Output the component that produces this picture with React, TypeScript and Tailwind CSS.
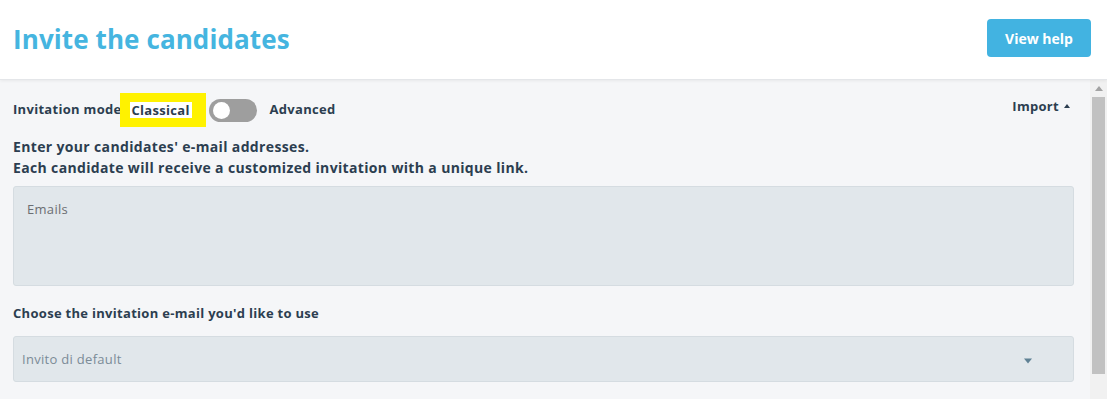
import React from "react";

export default function App() {
  return (
    <div className="w-[1107px] h-[399px] overflow-hidden bg-[#f5f6f8] flex flex-col" style={{ fontFamily: "'Open Sans', 'Noto Sans', sans-serif" }}>
      <header className="h-[80px] shrink-0 bg-white flex items-center justify-between pl-[13px] pr-[16px] border-b border-[#e4e6e9] shadow-[0_1px_3px_rgba(0,0,0,0.06)] relative z-10">
        <h1 className="text-[26px] font-bold text-[#45b5e0] tracking-[0.1px] leading-none mt-[-2px]">Invite the candidates</h1>
        <button className="w-[104px] h-[38px] rounded-[4px] bg-[#42b3e1] text-white text-[14px] font-bold mt-[-3px]">View help</button>
      </header>
      <div className="flex flex-1 min-h-0">
        <main className="flex-1 pl-[13px] pr-[16px] text-[#2c3e50] tracking-[0.3px]">
          <div className="flex items-center justify-between h-[34px] mt-[13px]">
            <div className="flex items-center text-[13px] font-bold">
              <span>Invitation mode</span>
              <span className="ml-[-2px] h-[34px] w-[86px] bg-[#fff200] flex items-center pl-[10px]">
                <span className="bg-white px-[2px] leading-[16px]">Classical</span>
              </span>
              <span className="ml-[3px] w-[48px] h-[23px] rounded-full bg-[#9e9e9e] relative">
                <span className="absolute left-[4px] top-[3px] w-[17px] h-[17px] rounded-full bg-white" />
              </span>
              <span className="ml-[13px]">Advanced</span>
            </div>
            <div className="flex items-center text-[13px] font-bold mt-[-6px] mr-[3px]">
              <span>Import</span>
              <svg width="8" height="6" viewBox="0 0 8 6" className="ml-[4px] mb-[2px]"><path d="M4 1 L7 5 H1 Z" fill="#2c3e50" /></svg>
            </div>
          </div>
          <div className="mt-[9px] text-[14px] font-bold leading-[21px] tracking-[0.35px]">
            <p>Enter your candidates' e-mail addresses.</p>
            <p>Each candidate will receive a customized invitation with a unique link.</p>
          </div>
          <div className="mt-[8px] h-[100px] rounded-[3px] bg-[#e1e7eb] border border-[#d5dce1] pl-[13px] pt-[13px] text-[13px] text-[#6b6e72]">Emails</div>
          <p className="mt-[18px] text-[13px] font-bold">Choose the invitation e-mail you'd like to use</p>
          <div className="mt-[12px] h-[46px] rounded-[3px] bg-[#e1e7eb] border border-[#d5dce1] pl-[8px] pr-[40px] flex items-center justify-between text-[13px] text-[#7b8b97]">
            <span className="mt-[3px]">Invito di default</span>
            <svg width="10" height="6" viewBox="0 0 10 6" className="mt-[4px]"><path d="M1 0.5 H9 L5 5.5 Z" fill="#5f8194" /></svg>
          </div>
        </main>
        <div className="w-[17px] bg-[#f1f1f1] flex flex-col items-center">
          <div className="h-[17px] flex items-center justify-center">
            <svg width="8" height="5" viewBox="0 0 8 5"><path d="M4 0 L8 5 H0 Z" fill="#a3a3a3" /></svg>
          </div>
          <div className="w-[13px] h-[277px] bg-[#c1c1c1]" />
        </div>
      </div>
    </div>
  );
}
